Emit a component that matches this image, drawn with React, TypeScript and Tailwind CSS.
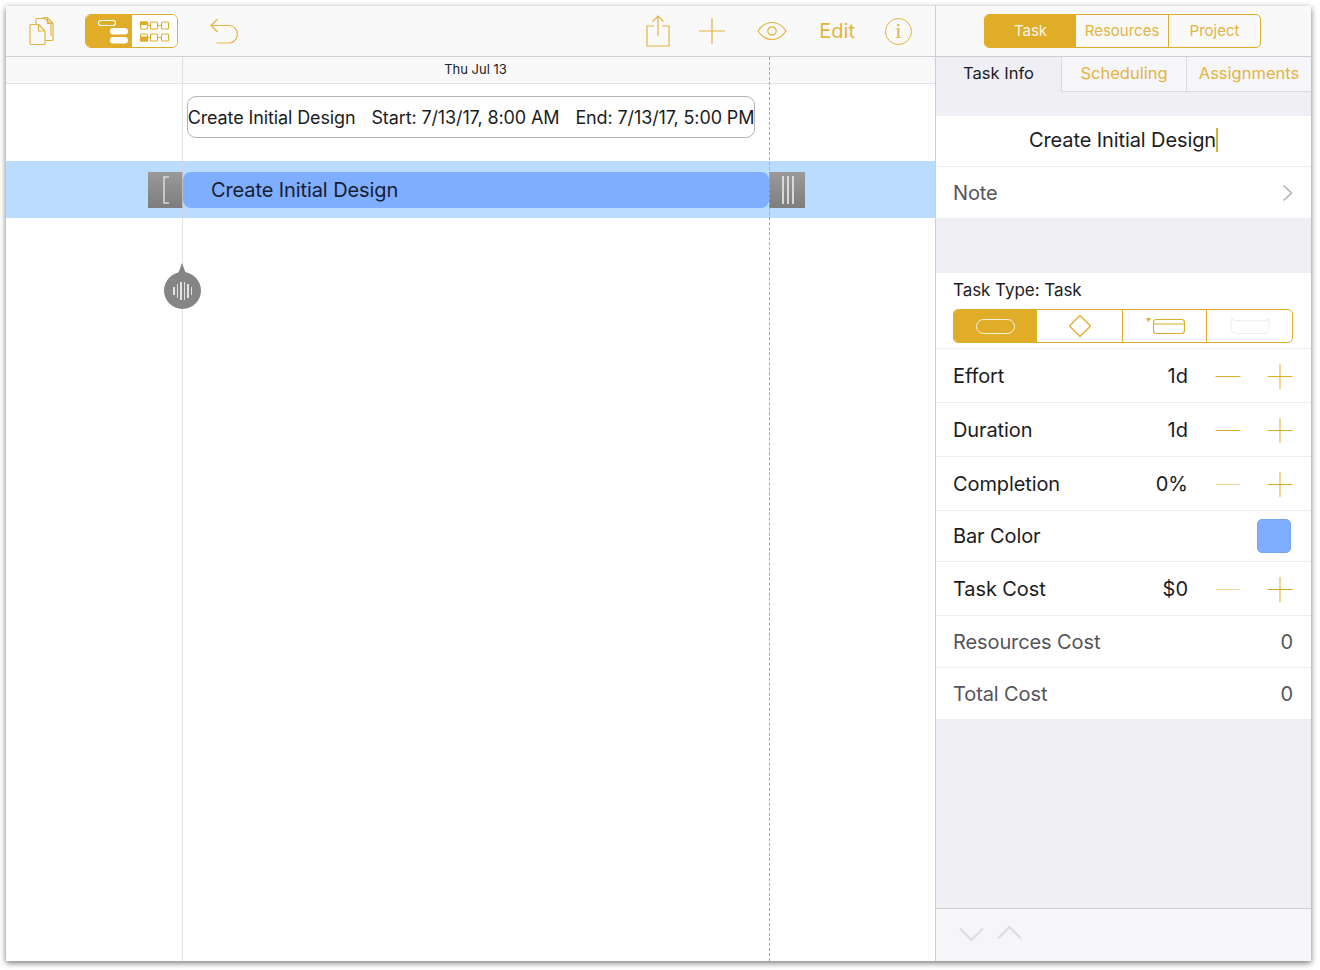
import type { ReactNode } from "react";

const GOLD = "#e0ad28";

function Stepper({ dim }: { dim?: boolean }) {
  return (
    <div className="flex items-center">
      <svg width="26" height="26" viewBox="0 0 26 26" className="mr-[26px]">
        <path d="M0.5 13.5H25.5" stroke={GOLD} strokeWidth="1" opacity={dim ? 0.45 : 1} />
      </svg>
      <svg width="26" height="26" viewBox="0 0 26 26">
        <path d="M0.5 13.5H25.5M13 1V26" stroke={GOLD} strokeWidth="1" />
      </svg>
    </div>
  );
}

function Row({ label, children, h, muted }: { label: string; children?: ReactNode; h: string; muted?: boolean }) {
  return (
    <div className={`flex items-center border-b border-[#efeff1] bg-white pl-[17px] pr-[18px] text-[20px] ${h} ${muted ? "text-[#55555a]" : "text-[#1c1c1e]"}`}>
      <span className="flex-1 tracking-[-0.1px]">{label}</span>
      {children}
    </div>
  );
}

function StepRow({ label, value, h, dim }: { label: string; value: string; h: string; dim?: boolean }) {
  return (
    <Row label={label} h={h}>
      <span className="mr-[27px]">{value}</span>
      <Stepper dim={dim} />
    </Row>
  );
}

function Grip({ count, gap, h }: { count: number; gap: string; h: string }) {
  return (
    <div className={`flex items-center justify-center ${gap}`}>
      {Array.from({ length: count }).map((_, i) => (
        <span key={i} className={`w-[2px] bg-[#d8d8d8] ${h}`} />
      ))}
    </div>
  );
}

function ToolbarLeft() {
  return (
    <div className="flex h-[51px] items-center border-b border-[#cfcfd1] bg-[#f9f9f9] pl-[23px] text-[#e3b440]">
      <svg width="26" height="30" viewBox="0 0 26 30" fill="none" stroke="currentColor" strokeWidth="1.2" strokeLinejoin="round">
        <path d="M1 9.5a1 1 0 0 1 1-1h7.5L16 15v12.5a1 1 0 0 1-1 1H2a1 1 0 0 1-1-1z" />
        <path d="M9.5 8.5V15H16" />
        <path d="M7 8V3.5a1 1 0 0 1 1-1h7.5L22 8v12" strokeWidth="1.1" />
        <path d="M14 2.5a1 1 0 0 1 1-1h3l6 6v16a1 1 0 0 1-1 1h-7" />
        <path d="M18.5 1.5V7.5H24" />
      </svg>
      <div className="ml-[30px] flex h-[34px] w-[93px] overflow-hidden rounded-[6px] border border-[#e0ad28]">
        <div className="flex w-[46px] items-center justify-center bg-[#e0ad28]">
          <svg width="38" height="28" viewBox="0 0 38 28" fill="none">
            <rect x="8.5" y="3.5" width="17" height="5" rx="2.5" stroke="white" strokeWidth="1.2" />
            <rect x="20" y="11" width="18" height="6.5" rx="3.2" fill="white" />
            <rect x="20" y="20" width="18" height="6.5" rx="3.2" fill="white" />
          </svg>
        </div>
        <div className="flex flex-1 items-center justify-center bg-white">
          <svg width="32" height="24" viewBox="0 0 32 24" fill="none" stroke="#e0ad28" strokeWidth="1.1">
            <rect x="1.5" y="3" width="7" height="7" rx="1" />
            <rect x="11.5" y="3" width="7" height="7" rx="1" />
            <rect x="22.5" y="3" width="7" height="7" rx="1" />
            <path d="M8.5 6.5h3M18.5 6.5h4" />
            <rect x="1.5" y="3" width="7" height="2.5" fill="#e0ad28" />
            <rect x="1.5" y="15" width="7" height="7" rx="1" />
            <rect x="11.5" y="15" width="7" height="7" rx="1" />
            <rect x="22.5" y="15" width="7" height="7" rx="1" />
            <path d="M8.5 18.5h3M18.5 18.5h4" />
            <rect x="1.5" y="18" width="7" height="4" fill="#e0ad28" />
          </svg>
        </div>
      </div>
      <svg width="32" height="26" viewBox="0 0 32 26" fill="none" stroke="currentColor" strokeWidth="1.2" className="ml-[32px]">
        <path d="M1 7.5H19.5a8.8 8.8 0 0 1 0 17.5H6.5" />
        <path d="M7.5 1L1 7.5L7.5 14" />
      </svg>
      <div className="flex-1" />
      <svg width="24" height="32" viewBox="0 0 24 32" fill="none" stroke="currentColor" strokeWidth="1.2">
        <path d="M8 11H1v20h22V11h-7" />
        <path d="M12 21V1M6.5 6.5L12 1l5.5 5.5" />
      </svg>
      <svg width="26" height="26" viewBox="0 0 26 26" fill="none" stroke="currentColor" strokeWidth="1.2" className="ml-[29px]">
        <path d="M0 13h26M13 0v26" />
      </svg>
      <svg width="30" height="20" viewBox="0 0 30 20" fill="none" stroke="currentColor" strokeWidth="1.2" className="ml-[32px]">
        <path d="M1 10C5 4 10 1.5 15 1.5S25 4 29 10C25 16 20 18.5 15 18.5S5 16 1 10z" />
        <circle cx="15" cy="10" r="4.2" />
      </svg>
      <span className="ml-[32px] font-['Inter',sans-serif] text-[20px] text-[#e3b440]">Edit</span>
      <span className="ml-[30px] mr-[23px] flex h-[27px] w-[27px] items-center justify-center rounded-full border border-[#e3b440] font-['Liberation_Serif',serif] text-[21px] leading-none">i</span>
    </div>
  );
}

function Timeline() {
  return (
    <div className="relative flex flex-1 flex-col overflow-hidden bg-white">
      <div className="flex h-[27px] items-center justify-center border-b border-[#e4e4e6] bg-[#f9f9f9] pl-[10px] text-[13px] text-[#222]">
        Thu Jul 13
      </div>
      <div className="pl-[181px] pt-[12px]">
        <div className="flex h-[42px] w-[568px] items-center justify-center gap-[16px] rounded-[9px] border border-[#b4b4b6] bg-white text-[18px] tracking-[-0.12px] whitespace-nowrap text-[#1c1c1e]">
          <span>Create Initial Design</span>
          <span>Start: 7/13/17, 8:00 AM</span>
          <span>End: 7/13/17, 5:00 PM</span>
        </div>
      </div>
      <div className="mt-[23px] flex h-[57px] items-center bg-[#b9dcff] pl-[142px]">
        <div className="flex h-[36px] w-[657px]">
          <div className="flex w-[35px] items-center justify-center bg-linear-to-b from-[#9a9a9a] to-[#7d7d7d]">
            <svg width="8" height="28" viewBox="0 0 8 28" fill="none" stroke="#dcdcdc" strokeWidth="1.5">
              <path d="M7 1H2V27H7" />
            </svg>
          </div>
          <div className="flex flex-1 items-center rounded-l-[8px] rounded-r-[8px] bg-[#7fadff] pl-[28px] text-[20px] tracking-[-0.1px] text-[#16202e]">
            Create Initial Design
          </div>
          <div className="flex w-[36px] bg-linear-to-b from-[#9a9a9a] to-[#7d7d7d] items-center justify-center pl-[2px]">
            <Grip count={3} gap="gap-[3px]" h="h-[28px]" />
          </div>
        </div>
      </div>
      {/* guide lines run over the rows */}
      <span className="absolute top-0 bottom-0 left-[176px] w-px bg-[#d4d4d6] opacity-70" />
      <span className="absolute top-0 bottom-0 left-[763px] border-l border-dashed border-[#a8a8aa]" />
      {/* drag knob under the bar */}
      <div className="absolute top-[215px] left-[158px] h-[37px] w-[37px] rounded-full bg-[#858585]">
        <span className="absolute -top-[9px] left-[14px] h-0 w-0 border-x-[4.5px] border-b-[11px] border-x-transparent border-b-[#858585]" />
        <div className="flex h-full items-center justify-center">
          <div className="flex items-center gap-[2px]">
            <span className="h-[8px] w-[1.5px] bg-[#e2e2e2]" />
            <span className="h-[14px] w-[1.5px] bg-[#e2e2e2]" />
            <span className="h-[18px] w-[1.5px] bg-[#e2e2e2]" />
            <span className="h-[18px] w-[1.5px] bg-[#e2e2e2]" />
            <span className="h-[14px] w-[1.5px] bg-[#e2e2e2]" />
            <span className="h-[8px] w-[1.5px] bg-[#e2e2e2]" />
          </div>
        </div>
      </div>
    </div>
  );
}

function Inspector() {
  return (
    <div className="flex w-[376px] flex-col border-l border-[#cfcfd1] bg-[#efeff4]">
      <div className="flex h-[51px] items-center border-b border-[#cfcfd1] bg-[#f9f9f9] pl-[48px]">
        <div className="flex h-[34px] w-[277px] overflow-hidden rounded-[5px] border border-[#e0ad28] text-[15px] text-[#e3b440]">
          <span className="flex w-[91px] items-center justify-center bg-[#e0ad28] text-[#fdf6e3]">Task</span>
          <span className="flex w-[93px] items-center justify-center border-r border-[#e0ad28]">Resources</span>
          <span className="flex flex-1 items-center justify-center">Project</span>
        </div>
      </div>
      <div className="flex h-[35px] text-[16.5px]">
        <span className="flex w-[125px] items-center justify-center pb-[2px] text-[#1c1c1e]">Task Info</span>
        <span className="flex w-[125px] items-center justify-center border-b border-l border-[#dcdce0] bg-[#f6f6f8] pb-[2px] text-[#e3b440]">Scheduling</span>
        <span className="flex flex-1 items-center justify-center border-b border-l border-[#dcdce0] bg-[#f6f6f8] pb-[2px] text-[#e3b440]">Assignments</span>
      </div>
      <div className="h-[24px]" />
      <div className="flex h-[51px] items-center justify-center border-b border-[#efeff1] bg-white pb-[2px] text-[20px] tracking-[-0.1px] text-[#1c1c1e]">
        Create Initial Design
        <span className="h-[24px] w-[2px] bg-[#e0ad28]" />
      </div>
      <Row label="Note" h="h-[52px]" muted>
        <svg width="11" height="18" viewBox="0 0 11 18" fill="none" stroke="#b5b5b8" strokeWidth="1.7">
          <path d="M1.5 1.5L9.5 9L1.5 16.5" />
        </svg>
      </Row>
      <div className="h-[54px]" />
      <div className="h-[76px] border-b border-[#efeff1] bg-white px-[17px] pt-[6px]">
        <div className="text-[17px] leading-[22px] tracking-[-0.05px] text-[#1c1c1e]">Task Type: Task</div>
        <div className="mt-[8px] flex h-[34px] w-[340px] overflow-hidden rounded-[5px] border border-[#e0ad28]">
          <div className="flex w-[83px] items-center justify-center bg-[#e0ad28]">
            <span className="h-[15px] w-[39px] rounded-full border border-[#fbf3dc]" />
          </div>
          <div className="flex w-[86px] items-center justify-center border-r border-[#e0ad28]">
            <svg width="24" height="24" viewBox="0 0 24 24" fill="none" stroke="#e0ad28" strokeWidth="1.2">
              <path d="M12 1.5L22.5 12L12 22.5L1.5 12Z" strokeLinejoin="round" />
            </svg>
          </div>
          <div className="flex w-[84px] items-center justify-center border-r border-[#e0ad28]">
            <svg width="40" height="20" viewBox="0 0 40 20" fill="none" stroke="#e0ad28" strokeWidth="1.1">
              <path d="M1 2h5L3.5 6z" fill="#e0ad28" stroke="none" />
              <rect x="8.5" y="3.5" width="31" height="14" rx="3" />
              <path d="M8.5 8h31" />
            </svg>
          </div>
          <div className="flex flex-1 items-center justify-center">
            <svg width="40" height="18" viewBox="0 0 40 18" fill="none" stroke="#ecedee" strokeWidth="1.1">
              <path d="M2 1.5c1 1.5 2 2.2 4 2.2h28c2 0 3-.7 4-2.2c.7 1 1 2 1 3.5v6c0 3-2 5.5-5 5.5H6c-3 0-5-2.5-5-5.5v-6c0-1.500.3-2.500 1-3.500z" />
            </svg>
          </div>
        </div>
      </div>
      <StepRow label="Effort" value="1d" h="h-[54px]" />
      <StepRow label="Duration" value="1d" h="h-[54px]" />
      <StepRow label="Completion" value="0%" h="h-[54px]" dim />
      <Row label="Bar Color" h="h-[51px]">
        <span className="mr-[2px] h-[34px] w-[34px] rounded-[5px] border border-[#76a3ee] bg-[#7fadff]" />
      </Row>
      <StepRow label="Task Cost" value="$0" h="h-[54px]" dim />
      <Row label="Resources Cost" h="h-[52px]" muted>
        <span>0</span>
      </Row>
      <Row label="Total Cost" h="h-[52px]" muted>
        <span>0</span>
      </Row>
      <div className="flex-1" />
      <div className="flex h-[53px] items-start gap-[13px] border-t border-[#cfcfd1] bg-[#f6f6f8] pl-[23px] pt-[18px]">
        <svg width="25" height="15" viewBox="0 0 25 15" fill="none" stroke="#dcdcde" strokeWidth="2">
          <path d="M1 1.500L12.500 13L24 1.500" />
        </svg>
        <svg width="25" height="15" viewBox="0 0 25 15" fill="none" stroke="#dcdcde" strokeWidth="2" className="-mt-[2px]">
          <path d="M1 13.500L12.500 2L24 13.500" />
        </svg>
      </div>
    </div>
  );
}

export default function App() {
  return (
    <div className="h-[970px] w-[1320px] overflow-hidden bg-white pt-[6px] pl-[6px] font-['Inter',sans-serif]">
      <div className="flex h-[955px] w-[1305px] shadow-[0_2px_6px_rgba(0,0,0,0.55)]">
        <div className="flex w-[929px] flex-col">
          <ToolbarLeft />
          <Timeline />
        </div>
        <Inspector />
      </div>
    </div>
  );
}
